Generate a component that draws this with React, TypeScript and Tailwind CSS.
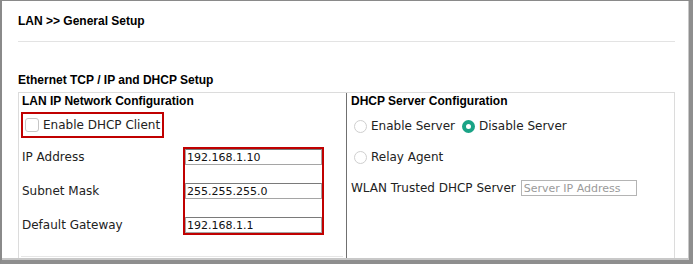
import React from 'react';

const body = "font-['DejaVu_Sans',sans-serif] text-[12px] text-[#222]";
const head = "font-['Liberation_Sans',Arial,sans-serif] text-[12px] font-bold text-black leading-[14px] h-[14px]";

function Radio({ checked }: { checked?: boolean }) {
  return checked ? (
    <span className="w-[13px] h-[13px] rounded-full border-[4px] border-[#1aa386] bg-white shrink-0" />
  ) : (
    <span className="w-[13px] h-[13px] rounded-full border border-[#cfcfcf] bg-white shrink-0" />
  );
}

function IpField({ value }: { value: string }) {
  return (
    <input
      type="text"
      defaultValue={value}
      className="w-full h-[16px] border border-[#a5a5a5] border-t-[#7a7a7a] px-[1px] font-['DejaVu_Sans',sans-serif] text-[11px] leading-[14px] text-[#111] outline-none bg-white"
    />
  );
}

export default function App() {
  return (
    <div className="w-[693px] h-[264px] bg-white border-t border-l-2 border-r-4 border-b-4 border-t-[#8a8a8a] border-l-[#8a8a8a] border-r-[#8e8e8e] border-b-[#8e8e8e]">
      <div className="h-full flex flex-col pl-[16px] border-r border-b-2 border-[#c8c8c8]">
        <div className={`mt-[13px] ${head}`}>LAN &gt;&gt; General Setup</div>
        <div className="mt-[13px] w-[657px] border-t border-[#e3e3e3]" />
        <div className={`mt-[31px] ${head}`}>Ethernet TCP / IP and DHCP Setup</div>

        <div className="mt-[5px] w-[657px] flex-1 flex border-t border-l border-r border-[#dcdcdc]">
          {/* LAN IP Network Configuration */}
          <div className="w-[328px] flex flex-col border-r border-[#707070]">
            <div className={`ml-[3px] mt-[1px] ${head}`}>LAN IP Network Configuration</div>
            <label className="ml-[2px] mt-[4px] w-[143px] h-[26px] border-2 border-[#c00000] flex items-center">
              <span className="ml-[2px] w-[14px] h-[14px] rounded-[3px] border border-[#c6c6c6] bg-white shrink-0" />
              <span className={`ml-[4px] leading-[14px] ${body}`}>Enable DHCP Client</span>
            </label>
            <div className="mt-[9px] flex">
              <div className={`ml-[3px] w-[161px] pt-[2px] flex flex-col gap-[18px] ${body}`}>
                <div className="h-[16px] leading-[16px]">IP Address</div>
                <div className="h-[16px] leading-[16px]">Subnet Mask</div>
                <div className="h-[16px] leading-[16px]">Default Gateway</div>
              </div>
              <div className="w-[141px] h-[88px] border-2 border-[#c00000] flex flex-col gap-[18px]">
                <IpField value="192.168.1.10" />
                <IpField value="255.255.255.0" />
                <IpField value="192.168.1.1" />
              </div>
            </div>
            <div className="mt-[21px] ml-[2px] mr-[3px] border-t border-[#e6e6e6]" />
          </div>

          {/* DHCP Server Configuration */}
          <div className="flex-1 flex flex-col">
            <div className={`ml-[4px] mt-[1px] ${head}`}>DHCP Server Configuration</div>
            <div className={`mt-[11px] h-[14px] flex items-center ${body}`}>
              <span className="ml-[7px] flex"><Radio /></span>
              <span className="ml-[4px] leading-[14px]">Enable Server</span>
              <span className="ml-[7px] flex"><Radio checked /></span>
              <span className="ml-[4px] leading-[14px]">Disable Server</span>
            </div>
            <div className={`mt-[17px] h-[14px] flex items-center ${body}`}>
              <span className="ml-[7px] flex"><Radio /></span>
              <span className="ml-[4px] leading-[14px]">Relay Agent</span>
            </div>
            <div className={`mt-[16px] h-[16px] flex items-center ${body}`}>
              <span className="ml-[4px] leading-[14px]">WLAN Trusted DHCP Server</span>
              <input
                type="text"
                placeholder="Server IP Address"
                className="ml-[5px] w-[116px] h-[16px] border border-[#b4b4b4] px-[2px] font-['DejaVu_Sans',sans-serif] text-[11px] leading-[14px] text-[#111] placeholder:text-[#9a9a9a] outline-none bg-white"
              />
            </div>
          </div>
        </div>
      </div>
    </div>
  );
}
